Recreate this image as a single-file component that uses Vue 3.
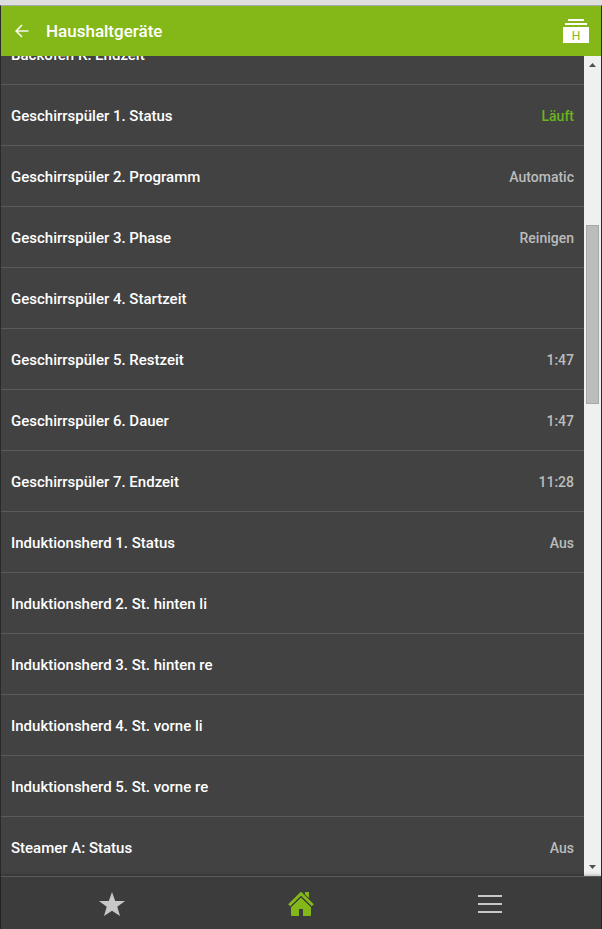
<!-- src/App.vue -->
<template>
  <div class="frame">
    <div class="app">
      <header class="app-header">
        <button class="icon-btn" type="button" aria-label="Zurück">
          <svg width="14" height="14" viewBox="0 0 14 14" fill="none" stroke="#f4f9ea" stroke-width="1.7">
            <path d="M13.5 7H1.5M7 1L1.2 7L7 13" />
          </svg>
        </button>
        <h1 class="title">Haushaltgeräte</h1>
        <button class="stack-btn" type="button" aria-label="Kategorie H">
          <span class="stack-line short"></span>
          <span class="stack-line"></span>
          <span class="stack-card">H</span>
        </button>
      </header>

      <main class="content">
        <ul ref="list" class="list">
          <li v-for="item in items" :key="item.label" class="row">
            <span class="label">{{ item.label }}</span>
            <span v-if="item.value" class="value" :class="{ active: item.active }">{{ item.value }}</span>
          </li>
        </ul>
        <div class="scrollbar" aria-hidden="true">
          <span class="arrow"><svg width="7" height="4" viewBox="0 0 7 4"><path d="M0 4L3.5 0L7 4z" fill="#505050" /></svg></span>
          <div class="track">
            <div class="thumb" :style="thumbStyle"></div>
          </div>
          <span class="arrow"><svg width="7" height="4" viewBox="0 0 7 4"><path d="M0 0L3.5 4L7 0z" fill="#505050" /></svg></span>
        </div>
      </main>

      <nav class="tab-bar">
        <a href="#favoriten" class="tab" aria-label="Favoriten">
          <svg width="26" height="24" viewBox="0 0 26 24">
            <path d="M13 0L16.2 9H26L18.3 14.8L21 24L13 18.8L5 24L7.7 14.8L0 9H9.8z" fill="#c8c8c8" />
          </svg>
        </a>
        <a href="#haus" class="tab" aria-label="Haus">
          <svg width="26" height="24" viewBox="0 0 26 24" fill="#84b818">
            <path d="M17 0H21V6L17 2.4z" />
            <path d="M13 5.6L23 15V23Q23 24 22 24H15V17H11V24H4Q3 24 3 23V15z" />
            <path d="M1.2 13.2L13 1.7L24.8 13.2" fill="none" stroke="#84b818" stroke-width="3" />
            <path d="M2.4 15.1L13 4.8L23.6 15.1" fill="none" stroke="#3c3c3c" stroke-width="1" />
          </svg>
        </a>
        <a href="#menu" class="tab" aria-label="Menü">
          <svg width="24" height="18" viewBox="0 0 24 18">
            <path d="M0 1H24M0 9H24M0 17H24" stroke="#c8c8c8" stroke-width="2" />
          </svg>
        </a>
      </nav>
    </div>
  </div>
</template>

<script setup>
import { computed, onMounted, ref } from 'vue'

const list = ref(null)

const scroll = ref({ start: 19.3, size: 22.8 })

const items = [
  { label: 'Backofen K: Endzeit' },
  { label: 'Geschirrspüler 1. Status', value: 'Läuft', active: true },
  { label: 'Geschirrspüler 2. Programm', value: 'Automatic' },
  { label: 'Geschirrspüler 3. Phase', value: 'Reinigen' },
  { label: 'Geschirrspüler 4. Startzeit' },
  { label: 'Geschirrspüler 5. Restzeit', value: '1:47' },
  { label: 'Geschirrspüler 6. Dauer', value: '1:47' },
  { label: 'Geschirrspüler 7. Endzeit', value: '11:28' },
  { label: 'Induktionsherd 1. Status', value: 'Aus' },
  { label: 'Induktionsherd 2. St. hinten li' },
  { label: 'Induktionsherd 3. St. hinten re' },
  { label: 'Induktionsherd 4. St. vorne li' },
  { label: 'Induktionsherd 5. St. vorne re' },
  { label: 'Steamer A: Status', value: 'Aus' }
]

const thumbStyle = computed(() => ({
  top: `${scroll.value.start}%`,
  height: `${scroll.value.size}%`
}))

onMounted(() => {
  list.value.scrollTop = 32
})
</script>

<style>
body {
  margin: 0;
  background: #3c3c3c;
}
</style>

<style scoped>
.frame {
  display: flex;
  flex-direction: column;
  box-sizing: border-box;
  height: 100vh;
  border-top: 5px solid #dedede;
  font-family: Roboto, "Liberation Sans", sans-serif;
  font-weight: 500;
}

.app {
  flex: 1;
  min-height: 0;
  display: flex;
  flex-direction: column;
  border: 1px solid #2a2a2a;
  border-top-color: #aaaaaa;
  border-bottom: none;
}

button {
  padding: 0;
  border: none;
  background: none;
  font: inherit;
  cursor: pointer;
}

.app-header {
  flex: none;
  display: flex;
  align-items: center;
  height: 50px;
  padding: 0 12px 0 14px;
  background: #84b818;
}

.icon-btn {
  display: flex;
}

.title {
  flex: 1;
  margin: 0 0 0 17px;
  font-size: 17px;
  line-height: 20px;
  font-weight: 500;
  color: #ffffff;
}

.stack-btn {
  display: flex;
  flex-direction: column;
  align-items: center;
  gap: 2px;
  width: 26px;
}

.stack-line {
  width: 22px;
  height: 2px;
  background: #ffffff;
}

.stack-line.short {
  width: 16px;
}

.stack-card {
  width: 26px;
  height: 16px;
  background: #ffffff;
  color: #84b818;
  font-size: 12px;
  font-weight: 400;
  line-height: 18px;
  text-align: center;
}

.content {
  flex: 1;
  min-height: 0;
  display: flex;
}

.list {
  flex: 1;
  margin: 0;
  padding: 0;
  list-style: none;
  overflow-y: auto;
  scrollbar-width: none;
  background: #424242;
}

.row {
  display: flex;
  align-items: center;
  justify-content: space-between;
  box-sizing: border-box;
  height: 61px;
  padding: 2px 10px 0;
  border-bottom: 1px solid #5a5a5a;
}

.label {
  font-size: 15px;
  line-height: 20px;
  color: #ffffff;
}

.value {
  font-size: 14px;
  line-height: 20px;
  color: #bcbcbc;
}

.value.active {
  color: #6ab41e;
}

.scrollbar {
  flex: none;
  display: flex;
  flex-direction: column;
  width: 17px;
  background: #f0f0f0;
}

.arrow {
  display: flex;
  align-items: center;
  justify-content: center;
  height: 18px;
}

.track {
  flex: 1;
  position: relative;
}

.thumb {
  position: absolute;
  left: 2px;
  right: 2px;
  box-sizing: border-box;
  border: 1px solid #a8a8a8;
  background: #bcbcbc;
}

.tab-bar {
  flex: none;
  position: relative;
  display: flex;
  height: 50px;
  padding: 2px 17px 0;
  border-top: 1px solid #5a5a5a;
  background: #3c3c3c;
  box-shadow: 0 0 4px rgba(0, 0, 0, 0.4);
}

.tab {
  flex: 1;
  display: flex;
  align-items: center;
  justify-content: center;
}
</style>
